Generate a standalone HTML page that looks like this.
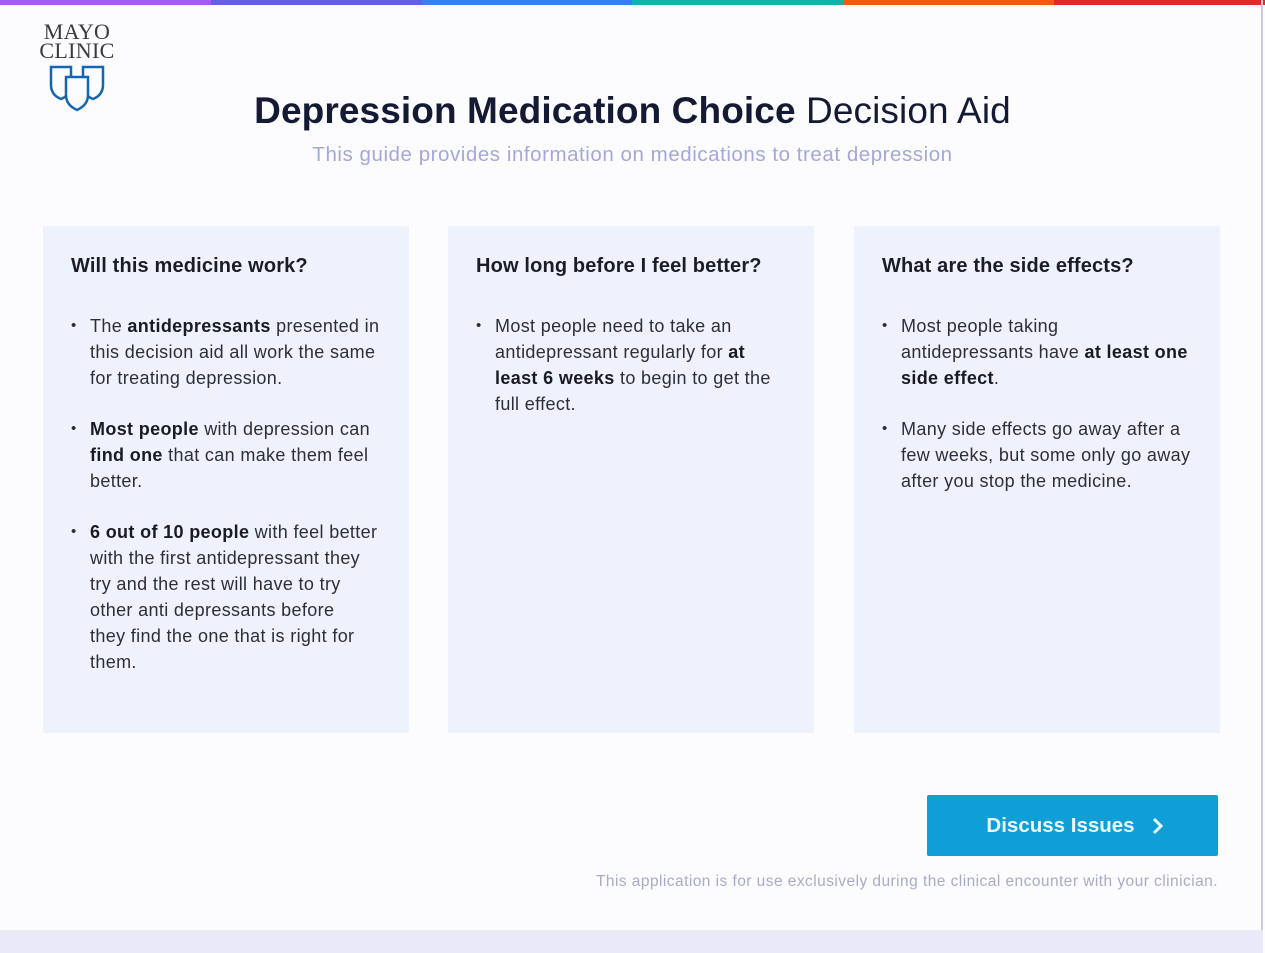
<!DOCTYPE html>
<html><head><meta charset="utf-8"><style>
*{margin:0;padding:0;box-sizing:border-box}
body{width:1265px;height:953px;background:#fcfcff;font-family:"Liberation Sans",sans-serif;position:relative;overflow:hidden;color:#2e2e38}
.bar{position:absolute;top:0;left:0;width:1265px;height:5px;display:flex}
.bar div{flex:1}
.frame{position:absolute;right:2px;top:0;width:2px;height:953px;background:#c9c9e6}
.bottom{position:absolute;left:0;top:930px;width:1263px;height:23px;background:#e9e9f7}
.logo{position:absolute;left:34px;top:22px;width:86px;text-align:center;font-family:"Liberation Serif",serif;color:#3a3a3a;font-size:22px;line-height:19px;letter-spacing:0.3px}
h1{position:absolute;top:90px;left:0;width:1265px;text-align:center;font-size:37px;font-weight:normal;color:#141a33;letter-spacing:0.1px}
h1 b{font-weight:bold}
.sub{position:absolute;top:143px;left:0;width:1265px;text-align:center;font-size:20.5px;color:#a3a8d8;letter-spacing:0.55px}
.card{position:absolute;top:226px;width:366px;height:507px;background:#eef2fc;padding:29px 26px 0 28px}
.card h2{font-size:20px;font-weight:bold;color:#1c1c26;margin-bottom:35px;letter-spacing:0.15px}
.card ul{list-style:none}
.card li{position:relative;padding-left:19px;font-size:18px;line-height:26px;margin-bottom:25px;color:#2e2e38;letter-spacing:0.35px}
.card li:before{content:"•";position:absolute;left:0;font-size:15px}
.card li b{color:#1a1a22}
.btn{position:absolute;left:927px;top:795px;width:291px;height:61px;background:#0f9fd6;color:#eaf8ff;font-size:20.5px;font-weight:bold;display:flex;align-items:center;justify-content:center;border-radius:2px;padding-left:6px}
.foot{position:absolute;right:47px;top:873px;font-size:15.5px;color:#a9abc6;letter-spacing:0.45px}
</style></head><body>
<div class="bar"><div style="background:#a55af2"></div><div style="background:#6460e6"></div><div style="background:#3a7df0"></div><div style="background:#10b3a8"></div><div style="background:#f25a12"></div><div style="background:#e02a2a"></div></div>
<div class="frame"></div>
<div class="bottom"></div>
<div class="logo">MAYO<br>CLINIC
<svg width="60" height="52" viewBox="0 0 60 52" style="display:block;margin:1px auto 0">
<g fill="#fcfcff" stroke="#1565b0" stroke-width="2.5">
<path d="M4 6 H24 V24 Q24 34 14 38 Q4 34 4 24 Z"/>
<path d="M36 6 H56 V24 Q56 34 46 38 Q36 34 36 24 Z"/>
<path d="M19 16 H41 V34 Q41 44 30 49 Q19 44 19 34 Z"/>
</g></svg></div>
<h1><b>Depression Medication Choice</b> Decision Aid</h1>
<div class="sub">This guide provides information on medications to treat depression</div>
<div class="card" style="left:43px"><h2>Will this medicine work?</h2><ul>
<li>The <b>antidepressants</b> presented in this decision aid all work the same for treating depression.</li>
<li><b>Most people</b> with depression can <b>find one</b> that can make them feel better.</li>
<li><b>6 out of 10 people</b> with feel better with the first antidepressant they<br>try and the rest will have to try<br>other anti depressants before<br>they find the one that is right for<br>them.</li></ul></div>
<div class="card" style="left:448px"><h2>How long before I feel better?</h2><ul>
<li>Most people need to take an antidepressant regularly for <b>at least 6 weeks</b> to begin to get the full effect.</li></ul></div>
<div class="card" style="left:854px"><h2>What are the side effects?</h2><ul>
<li>Most people taking antidepressants have <b>at least one side effect</b>.</li>
<li>Many side effects go away after a few weeks, but some only go away after you stop the medicine.</li></ul></div>
<div class="btn" style="font-weight:600">Discuss Issues<svg width="14" height="20" viewBox="0 0 14 20" style="margin-left:16px"><path d="M3 3 L10 10 L3 17" fill="none" stroke="#eaf8ff" stroke-width="3"/></svg></div>
<div class="foot">This application is for use exclusively during the clinical encounter with your clinician.</div>
</body></html>
